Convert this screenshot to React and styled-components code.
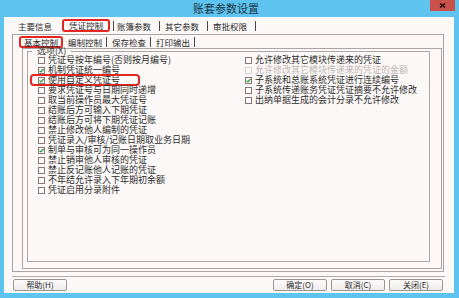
import React from "react";
import styled, {createGlobalStyle} from "styled-components";

const GlobalStyle = createGlobalStyle`
  html, body {
    margin: 0;
    padding: 0;
    background: #5fc3ef;
  }
  body {
    font-family: "Noto Sans CJK SC", "Noto Sans", sans-serif;
    color: #2b2b2b;
  }
`;

const Window = styled.div`
  width: 459px;
  height: 298px;
  background: #5fc3ef;
  display: flex;
  flex-direction: column;
  overflow: hidden;
`;

const TitleBar = styled.div`
  height: 17px;
  flex-shrink: 0;
  display: flex;
  align-items: flex-start;
  padding-left: 22px;
`;

const Title = styled.div`
  flex: 1;
  text-align: center;
  font-size: 11px;
  line-height: 17px;
  color: #1b3448;
`;

const CloseButton = styled.div`
  width: 25px;
  height: 11px;
  margin-right: 4px;
  background: #c9514b;
  display: flex;
  align-items: center;
  justify-content: center;
`;

const Body = styled.div`
  flex: 1;
  min-height: 0;
  margin: 0 5px 5px 4px;
  background: #fbf8f7;
  display: flex;
  flex-direction: column;
`;

const TabBar = styled.div`
  height: ${p => p.$height}px;
  flex-shrink: 0;
  display: flex;
  align-items: center;
  padding-left: ${p => p.$indent}px;
  font-size: 8.5px;
`;

const Tab = styled.div`
  height: 10px;
  line-height: 10px;
  white-space: nowrap;
  margin-left: ${p => p.$ml || 0}px;
`;

const ActiveTab = styled(Tab)`
  height: ${p => p.$h}px;
  line-height: ${p => p.$h}px;
  border: 2px solid #e3261f;
  border-radius: 3px;
  padding: 0 ${p => p.$pad}px;
`;

const Sep = styled.div`
  width: 1px;
  height: 10px;
  background: #4a4a4a;
  margin: 0 ${p => p.$mr}px 0 ${p => p.$ml}px;
`;

const Panel = styled.div`
  flex: 1;
  min-height: 0;
  display: flex;
  flex-direction: column;
  border: 1px solid #aca4a4;
  margin: ${p => p.$margin};
`;

const GroupBox = styled.fieldset`
  flex: 1;
  min-width: 0;
  margin: -2px 11px 6px 4px;
  padding: 0 0 0 4px;
  border: 1px solid #aea6a6;
`;

const Legend = styled.legend`
  font-size: 9px;
  line-height: 8px;
  height: 8px;
  padding: 0 5px;
  color: #333;
`;

const Columns = styled.div`
  display: grid;
  grid-template-columns: 207px 1fr;
  padding-left: 6px;
`;

const Column = styled.div`
  display: flex;
  flex-direction: column;
`;

const Row = styled.div`
  display: flex;
  align-items: center;
  gap: 3px;
  height: 10px;
  line-height: 10px;
  width: fit-content;
  font-size: 9px;
  white-space: nowrap;
  color: ${p => (p.$disabled ? "#bdb6b6" : "#2e2e2e")};
  ${p => p.$highlight && `
    outline: 2px solid #e3261f;
    outline-offset: -1px;
    border-radius: 3px;
    margin-left: -7px;
    padding: 0 19px 0 7px;
  `}
`;

const Box = styled.span`
  width: 7px;
  height: 7px;
  box-sizing: border-box;
  flex-shrink: 0;
  background: #fff;
  border: 1px solid ${p => (p.$disabled ? "#d6cfcf" : "#8d7474")};
  display: flex;
  align-items: center;
  justify-content: center;
`;

const Footer = styled.div`
  flex-shrink: 0;
  display: flex;
  align-items: center;
  gap: 4px;
  margin: 4px 9px 0 8px;
  padding: 2px 2px 2px 1px;
  border-top: 1px solid #b3abab;
`;

const Button = styled.div`
  width: 54px;
  height: 12px;
  box-sizing: border-box;
  border: 1px solid #9d9595;
  border-radius: 2px;
  background: linear-gradient(#fdfbfb, #efebeb);
  font-size: 8px;
  line-height: 10px;
  text-align: center;
  color: #2b2b2b;
`;

const Spacer = styled.div`
  flex: 1;
`;

const leftOptions = [
  {text: "凭证号按年编号(否则按月编号)"},
  {text: "机制凭证统一编号", checked: true},
  {text: "使用自定义凭证号", checked: true, highlight: true},
  {text: "要求凭证号与日期同时递增"},
  {text: "取当前操作员最大凭证号"},
  {text: "结账后方可输入下期凭证"},
  {text: "结账后方可将下期凭证记账"},
  {text: "禁止修改他人编制的凭证"},
  {text: "凭证录入/审核/记账日期取业务日期"},
  {text: "制单与审核可为同一操作员", checked: true},
  {text: "禁止销审他人审核的凭证"},
  {text: "禁止反记账他人记账的凭证"},
  {text: "不年结允许录入下年期初余额"},
  {text: "凭证启用分录附件"},
];

const rightOptions = [
  {text: "允许修改其它模块传递来的凭证"},
  {text: "允许修改其它模块传递来的凭证的金额", disabled: true},
  {text: "子系统和总账系统凭证进行连续编号", checked: true},
  {text: "子系统传递账务凭证凭证摘要不允许修改"},
  {text: "出纳单据生成的会计分录不允许修改"},
];

const Check = () => (
  <svg width="5" height="5" viewBox="0 0 5 5">
    <path d="M0.5 2.6 L2 4 L4.6 1" fill="none" stroke="#1f9a34" strokeWidth="1.2"/>
  </svg>
);

const Option = ({text, checked, disabled, highlight}) => (
  <Row $disabled={disabled} $highlight={highlight}>
    <Box $disabled={disabled}>{checked && <Check/>}</Box>
    {text}
  </Row>
);

export default function App() {
  return (
    <Window>
      <GlobalStyle/>
      <TitleBar>
        <Title>账套参数设置</Title>
        <CloseButton>
          <svg width="7" height="5" viewBox="0 0 7 5">
            <path d="M1 0.5 L6 4.5 M6 0.5 L1 4.5" stroke="#2a0f0f" strokeWidth="1.5"/>
          </svg>
        </CloseButton>
      </TitleBar>
      <Body>
        <TabBar $height={17} $indent={14}>
          <Tab>主要信息</Tab>
          <ActiveTab $ml={10} $pad={5} $h={9}>凭证控制</ActiveTab>
          <Sep $ml={3} $mr={3}/>
          <Tab>账簿参数</Tab>
          <Sep $ml={8} $mr={5}/>
          <Tab>其它参数</Tab>
          <Sep $ml={8} $mr={5}/>
          <Tab>审批权限</Tab>
          <Sep $ml={8} $mr={0}/>
        </TabBar>
        <Panel $margin="0 10px 0 8px">
          <TabBar $height={13} $indent={6}>
            <ActiveTab $pad={3} $h={8}>基本控制</ActiveTab>
            <Tab $ml={5}>编制控制</Tab>
            <Sep $ml={4} $mr={5}/>
            <Tab>保存检查</Tab>
            <Sep $ml={4} $mr={5}/>
            <Tab>打印输出</Tab>
            <Sep $ml={4} $mr={0}/>
          </TabBar>
          <Panel $margin="0 1px 2px 9px">
            <GroupBox>
              <Legend>选项(X)</Legend>
              <Columns>
                <Column>
                  {leftOptions.map(o => <Option key={o.text} {...o}/>)}
                </Column>
                <Column>
                  {rightOptions.map(o => <Option key={o.text} {...o}/>)}
                </Column>
              </Columns>
            </GroupBox>
          </Panel>
        </Panel>
        <Footer>
          <Button>帮助(H)</Button>
          <Spacer/>
          <Button>确定(O)</Button>
          <Button>取消(C)</Button>
          <Button>关闭(E)</Button>
        </Footer>
      </Body>
    </Window>
  );
}
